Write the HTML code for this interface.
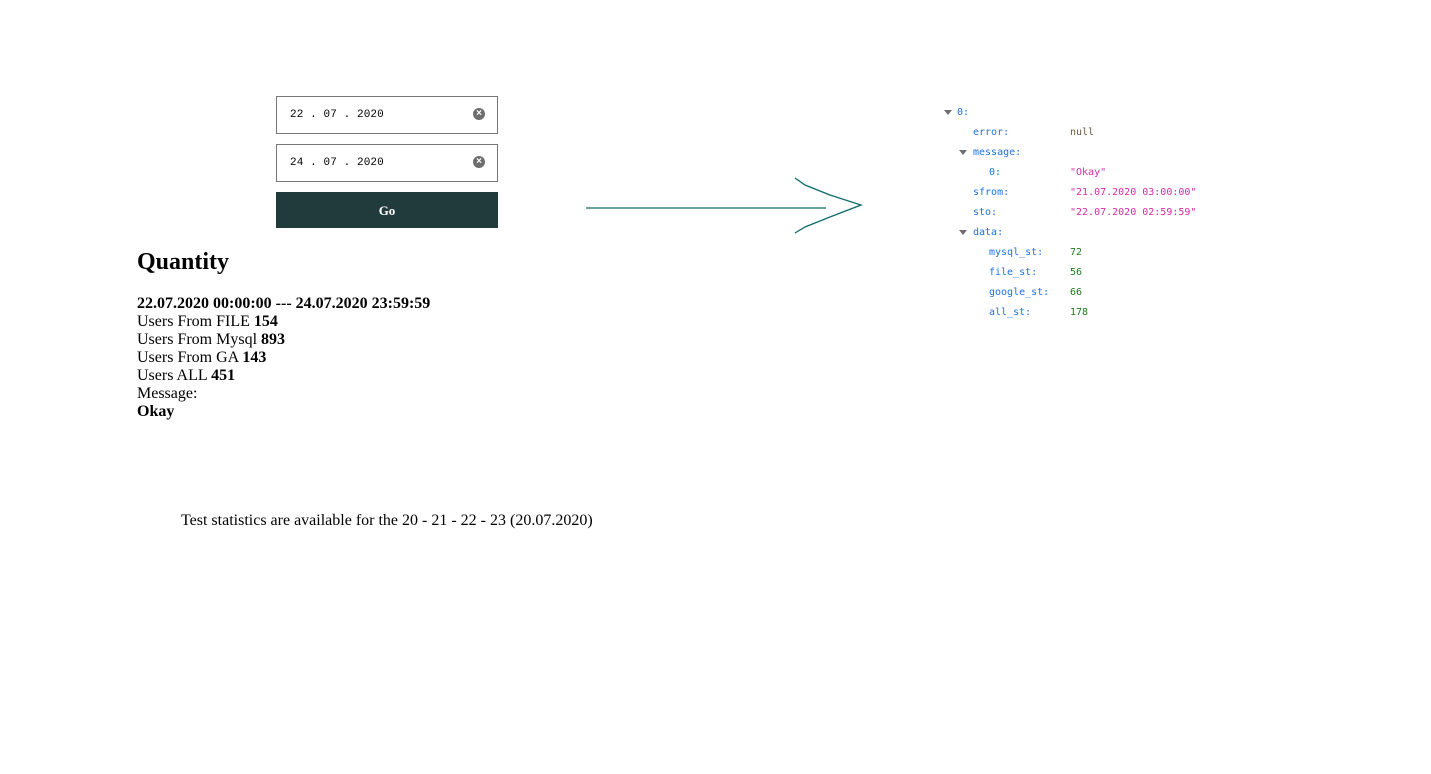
<!DOCTYPE html>
<html><head><style>
body{margin:0;width:1431px;height:774px;background:#fff;position:relative;font-family:"Liberation Serif",serif;font-size:16px;color:#000}
.in{position:absolute;left:276px;width:222px;height:38px;border:1px solid #767676;box-sizing:border-box;font-family:"Liberation Mono",monospace;font-size:11px;line-height:36px;padding-left:13px;color:#000;letter-spacing:0.1px}
.in .x{position:absolute;right:12px;top:11px;width:12px;height:12px;border-radius:50%;background:#6e6e6e;color:#fff;font:bold 10px/12px "Liberation Sans",sans-serif;text-align:center;letter-spacing:0}
.btn{position:absolute;left:276px;top:192px;width:222px;height:36px;background:#213b3d;color:#fff;font-weight:bold;font-size:13px;text-align:center;line-height:38px}
.j{position:absolute;font-family:"DejaVu Sans Mono",monospace;font-size:10px;line-height:20px;margin-top:1px}
.k{color:#1a73e8}
</style></head><body>
<div class="in" style="top:96px">22 . 07 . 2020<span class="x">×</span></div>
<div class="in" style="top:144px">24 . 07 . 2020<span class="x">×</span></div>
<div class="btn">Go</div>
<div style="position:absolute;left:137px;top:249px;font-size:24px;font-weight:bold">Quantity</div>
<div style="position:absolute;left:137px;top:295px;line-height:18px">
<b>22.07.2020 00:00:00 --- 24.07.2020 23:59:59</b><br>Users From FILE <b>154</b><br>Users From Mysql <b>893</b><br>Users From GA <b>143</b><br>Users ALL <b>451</b><br>Message:<br><b>Okay</b></div>
<div style="position:absolute;left:181px;top:512px">Test statistics are available for the 20 - 21 - 22 - 23 (20.07.2020)</div>
<svg style="position:absolute;left:0;top:0" width="1431" height="774"><g stroke="#0b6b6b" stroke-width="1.3" fill="none"><line x1="586" y1="208" x2="826" y2="208"/><polyline points="795,178 805,185 830,195 861,205 830,217 805,227 795,233"/></g>
<g fill="#6e6e6e"><polygon points="944,110 952,110 948,115"/><polygon points="959,150 967,150 963,155"/><polygon points="959,230 967,230 963,235"/></g></svg>
<div class="j" style="left:957px;top:102px"><span class="k">0:</span></div>
<div class="j" style="left:973px;top:122px"><span class="k">error:</span></div><div class="j" style="left:1070px;top:122px;color:#6d5a3a">null</div>
<div class="j" style="left:973px;top:142px"><span class="k">message:</span></div>
<div class="j" style="left:989px;top:162px"><span class="k">0:</span></div><div class="j" style="left:1070px;top:162px;color:#d62aa8">"Okay"</div>
<div class="j" style="left:973px;top:182px"><span class="k">sfrom:</span></div><div class="j" style="left:1070px;top:182px;color:#d62aa8">"21.07.2020 03:00:00"</div>
<div class="j" style="left:973px;top:202px"><span class="k">sto:</span></div><div class="j" style="left:1070px;top:202px;color:#d62aa8">"22.07.2020 02:59:59"</div>
<div class="j" style="left:973px;top:222px"><span class="k">data:</span></div>
<div class="j" style="left:989px;top:242px"><span class="k">mysql_st:</span></div><div class="j" style="left:1070px;top:242px;color:#1e7a1e">72</div>
<div class="j" style="left:989px;top:262px"><span class="k">file_st:</span></div><div class="j" style="left:1070px;top:262px;color:#1e7a1e">56</div>
<div class="j" style="left:989px;top:282px"><span class="k">google_st:</span></div><div class="j" style="left:1070px;top:282px;color:#1e7a1e">66</div>
<div class="j" style="left:989px;top:302px"><span class="k">all_st:</span></div><div class="j" style="left:1070px;top:302px;color:#1e7a1e">178</div>
</body></html>
